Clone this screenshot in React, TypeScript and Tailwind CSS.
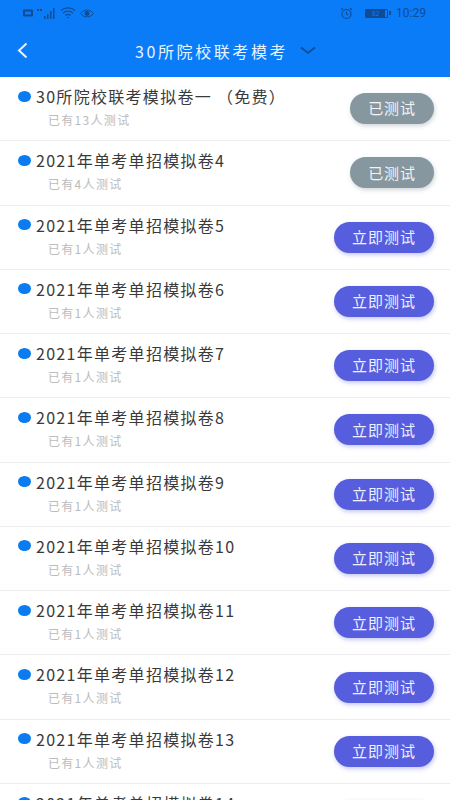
const font = '"Noto Sans CJK SC", "Noto Sans", sans-serif';

const rows = [
  { title: "30所院校联考模拟卷一 （免费）", count: 13, done: true },
  { title: "2021年单考单招模拟卷4", count: 4, done: true },
  { title: "2021年单考单招模拟卷5", count: 1, done: false },
  { title: "2021年单考单招模拟卷6", count: 1, done: false },
  { title: "2021年单考单招模拟卷7", count: 1, done: false },
  { title: "2021年单考单招模拟卷8", count: 1, done: false },
  { title: "2021年单考单招模拟卷9", count: 1, done: false },
  { title: "2021年单考单招模拟卷10", count: 1, done: false },
  { title: "2021年单考单招模拟卷11", count: 1, done: false },
  { title: "2021年单考单招模拟卷12", count: 1, done: false },
  { title: "2021年单考单招模拟卷13", count: 1, done: false },
  { title: "2021年单考单招模拟卷14", count: 1, done: false },
];

function StatusBar() {
  return (
    <div className="flex h-[26px] items-center justify-between pl-[23px] pr-[24px] text-[#0f4c94]">
      <div className="flex items-center gap-[4px]">
        <svg width="10" height="8" viewBox="0 0 10 8">
          <rect x="0" y="0.5" width="10" height="7" rx="1" fill="currentColor" />
          <rect x="2" y="2.5" width="6" height="3" fill="#0a7cf8" />
        </svg>
        <svg width="19" height="11" viewBox="0 0 19 11" fill="currentColor">
          <rect x="0" y="1" width="2" height="2" />
          <rect x="3" y="1" width="2" height="2" />
          <rect x="7" y="8" width="1.5" height="3" />
          <rect x="10" y="6" width="1.5" height="5" />
          <rect x="13" y="3" width="1.5" height="8" />
          <rect x="16" y="0" width="1.5" height="11" />
        </svg>
        <svg width="16" height="12" viewBox="0 0 16 12" fill="none" stroke="currentColor" strokeWidth="1.2">
          <path d="M1 3.5C5 0 11 0 15 3.5" />
          <path d="M3.2 6C6 3.6 10 3.6 12.8 6" />
          <path d="M5.5 8.4C7 7.3 9 7.3 10.5 8.4" />
          <circle cx="8" cy="10.6" r="0.8" fill="currentColor" stroke="none" />
        </svg>
        <svg width="14" height="9" viewBox="0 0 14 9">
          <path d="M0.5 4.5C3.8 0 10.2 0 13.5 4.5C10.2 9 3.8 9 0.5 4.5Z" fill="none" stroke="currentColor" />
          <circle cx="7" cy="4.5" r="2.4" fill="currentColor" />
        </svg>
      </div>
      <div className="flex items-center">
        <svg width="13" height="13" viewBox="0 0 13 13" fill="none" stroke="currentColor" strokeWidth="1.2">
          <circle cx="6.5" cy="7" r="4.5" />
          <path d="M6.5 4.5V7L8 8" />
          <path d="M1 3L3 1M12 3L10 1" />
        </svg>
        <div className="ml-[12px] flex h-[9px] w-[23px] items-center rounded-[1px] border border-[#0f4c94]">
          <div className="flex h-full w-[19px] items-center justify-center bg-[#0f4c94] text-[7px] leading-none text-[#0a7cf8]">82</div>
        </div>
        <div className="ml-[1px] h-[4px] w-[2px] bg-[#0f4c94]" />
        <span className="ml-[5px] text-[12px] leading-none" style={{ fontFamily: "Roboto, sans-serif" }}>10:29</span>
      </div>
    </div>
  );
}

function Header() {
  return (
    <div className="flex h-[51px] items-center justify-between pb-[2px] pl-[17px] pr-[134px]">
      <svg width="11" height="17" viewBox="0 0 11 17" fill="none" stroke="#e8f3ff" strokeWidth="2">
        <path d="M9.5 1.5L2 8.5L9.5 15.5" />
      </svg>
      <div className="ml-[107px] flex-1 whitespace-nowrap text-[16px] leading-none tracking-[2.6px] text-[#e8f3ff]">30所院校联考模考</div>
      <svg width="16" height="9" viewBox="0 0 16 9" fill="none" stroke="#0f4c94" strokeWidth="1.7">
        <path d="M1 1.5L8 7L15 1.5" />
      </svg>
    </div>
  );
}

function Row({ title, count, done }: { title: string; count: number; done: boolean }) {
  return (
    <div className="flex h-[64.27px] shrink-0 items-center justify-between border-b border-[#ececec] pl-[18px] pr-[16px]">
      <div className="flex flex-col self-start pt-[9px]">
        <div className="flex items-center">
          <span className="h-[11px] w-[13px] shrink-0 rounded-[50%] bg-[#0a7cf0]" />
          <span className="ml-[5px] whitespace-nowrap text-[16px] leading-[20px] tracking-[1.3px] text-[#3a3a3a]">{title}</span>
        </div>
        <div className="ml-[30px] mt-[5px] whitespace-nowrap text-[12px] leading-[18px] tracking-[1.3px] text-[#bbbbbb]">
          已有{count}人测试
        </div>
      </div>
      {done ? (
        <button className="flex h-[31px] w-[84px] items-center justify-center rounded-full bg-[#87979f] text-[15px] tracking-[0.8px] text-[#f2f4f5] shadow-[1px_2px_4px_rgba(100,120,130,0.3)]">
          已测试
        </button>
      ) : (
        <button className="flex h-[31px] w-[100px] items-center justify-center rounded-full bg-[#575edd] text-[15px] tracking-[1px] text-[#eef0ff] shadow-[1px_2px_4px_rgba(90,95,220,0.35)]">
          立即测试
        </button>
      )}
    </div>
  );
}

export default function App() {
  return (
    <div className="flex h-[800px] w-[450px] flex-col overflow-hidden bg-white" style={{ fontFamily: font }}>
      <div className="shrink-0 bg-[#0a7cf8]">
        <StatusBar />
        <Header />
      </div>
      {rows.map((r) => (
        <Row key={r.title} title={r.title} count={r.count} done={r.done} />
      ))}
    </div>
  );
}
